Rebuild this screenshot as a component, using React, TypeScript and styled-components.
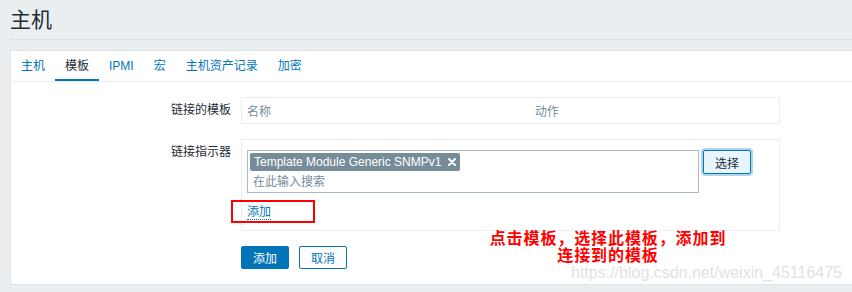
import React from 'react';
import styled, { createGlobalStyle } from 'styled-components';

const GlobalStyle = createGlobalStyle`
    body {
        margin: 0;
        background-color: #ebeef0;
        font-family: "Liberation Sans", Arial, "Noto Sans CJK SC", sans-serif;
        font-size: 12px;
        color: #1f2c33;
    }
`

const Page = styled.div`
    position: relative;
    padding-left: 10px;
    height: 292px;
    overflow: hidden;
`

const Header = styled.header`
    height: 39px;
    border-bottom: 1px solid #dde2e5;
    display: flex;
    align-items: center;
`

const Title = styled.h1`
    margin: 0;
    font-size: 21px;
    font-weight: normal;
    line-height: 24px;
    color: #1f2c33;
`

const Card = styled.div`
    margin-top: 10px;
    background-color: #fff;
    border: 1px solid #dfe4e7;
    border-right: none;
    padding-bottom: 15px;
`

const TabBar = styled.nav`
    display: flex;
    height: 30px;
    border-bottom: 1px solid #ebeef0;
`

const Tab = styled.span<{ $active?: boolean }>`
    display: flex;
    align-items: center;
    padding: 0 10px;
    line-height: 14px;
    color: ${p => (p.$active ? '#1f2c33' : '#0275b8')};
    box-shadow: ${p => (p.$active ? 'inset 0 -2px 0 #0275b8' : 'none')};
`

const Form = styled.div`
    display: grid;
    grid-template-columns: 220px 539px;
    column-gap: 10px;
    row-gap: 15px;
    padding-top: 15px;
`

const Label = styled.div`
    text-align: right;
    padding-top: 6px;
    line-height: 14px;
`

const TableBox = styled.div`
    display: grid;
    grid-template-columns: 288px 1fr;
    height: 27px;
    border: 1px solid #ebeef0;
    box-sizing: border-box;
    color: #768d99;
`

const HeadCell = styled.div`
    display: flex;
    align-items: center;
    padding-left: 5px;
`

const FieldBox = styled.div`
    border: 1px solid #ebeef0;
    box-sizing: border-box;
    height: 92px;
    padding: 10px 5px 0;
`

const SelectRow = styled.div`
    display: flex;
    align-items: flex-start;
    gap: 3px;
`

const MultiSelect = styled.div`
    width: 452px;
    height: 43px;
    box-sizing: border-box;
    border: 1px solid #acbbc2;
    padding: 2px 2px 0;
`

const Chip = styled.span`
    display: inline-flex;
    align-items: center;
    gap: 7px;
    height: 18px;
    padding: 0 4px 0 4px;
    background-color: #768d99;
    color: #fff;
    border-radius: 2px;
    line-height: 18px;
`

const Placeholder = styled.div`
    padding: 4px 0 0 3px;
    color: #768d99;
    line-height: 14px;
`

const SelectButton = styled.button`
    width: 48px;
    height: 24px;
    padding: 0;
    font: inherit;
    color: #1f2c33;
    background-color: #e8f5ff;
    border: 1px solid #0275b8;
    border-radius: 2px;
    box-shadow: 0 0 0 2px rgba(2, 117, 184, 0.3);
    margin-left: 1px;
`

const AddLink = styled.span`
    display: inline-block;
    margin-top: 13px;
    color: #0275b8;
    line-height: 13px;
    border-bottom: 1px dotted #0275b8;
`

const Buttons = styled.div`
    grid-column: 2;
    display: flex;
    gap: 10px;
`

const Button = styled.button<{ $primary?: boolean }>`
    width: 48px;
    height: 23px;
    padding: 0;
    font: inherit;
    border-radius: 2px;
    border: 1px solid #0275b8;
    background-color: ${p => (p.$primary ? '#0275b8' : '#fff')};
    color: ${p => (p.$primary ? '#fff' : '#0275b8')};
`

const RedFrame = styled.div`
    position: absolute;
    left: 231px;
    top: 200px;
    width: 84px;
    height: 23px;
    box-sizing: border-box;
    border: 2px solid #ff0000;
`

const Note = styled.div`
    position: absolute;
    left: 482px;
    top: 229px;
    width: 252px;
    text-align: center;
    color: #ff0000;
    font-family: "Noto Sans CJK SC", sans-serif;
    font-weight: bold;
    font-size: 16px;
    letter-spacing: 0.9px;
`

const NoteLine = styled.div`
    height: 17px;
    line-height: 17px;
`

const Watermark = styled.div`
    position: absolute;
    left: 571px;
    top: 264px;
    font-family: "Liberation Sans", Arial, sans-serif;
    font-size: 16px;
    line-height: 17px;
    color: #e2e2e2;
`

const CloseIcon = () => (
    <svg width="8" height="8" viewBox="0 0 8 8">
        <path d="M1 1 L7 7 M7 1 L1 7" stroke="#fff" strokeWidth="2" strokeLinecap="round"/>
    </svg>
);

const App: React.FC = () => {
    const tabs = ['主机', '模板', 'IPMI', '宏', '主机资产记录', '加密'];
    return (
        <Page>
            <GlobalStyle/>
            <Header>
                <Title>主机</Title>
            </Header>
            <Card>
                <TabBar>
                    {tabs.map(t => <Tab key={t} $active={t === '模板'}>{t}</Tab>)}
                </TabBar>
                <Form>
                    <Label>链接的模板</Label>
                    <TableBox>
                        <HeadCell>名称</HeadCell>
                        <HeadCell>动作</HeadCell>
                    </TableBox>
                    <Label>链接指示器</Label>
                    <FieldBox>
                        <SelectRow>
                            <MultiSelect>
                                <Chip>
                                    Template Module Generic SNMPv1
                                    <CloseIcon/>
                                </Chip>
                                <Placeholder>在此输入搜索</Placeholder>
                            </MultiSelect>
                            <SelectButton type="button">选择</SelectButton>
                        </SelectRow>
                        <AddLink>添加</AddLink>
                    </FieldBox>
                    <Buttons>
                        <Button type="button" $primary>添加</Button>
                        <Button type="button">取消</Button>
                    </Buttons>
                </Form>
            </Card>
            <RedFrame/>
            <Note>
                <NoteLine>点击模板，选择此模板，添加到</NoteLine>
                <NoteLine>连接到的模板</NoteLine>
            </Note>
            <Watermark>https://blog.csdn.net/weixin_45116475</Watermark>
        </Page>
    );
}

export default App;
